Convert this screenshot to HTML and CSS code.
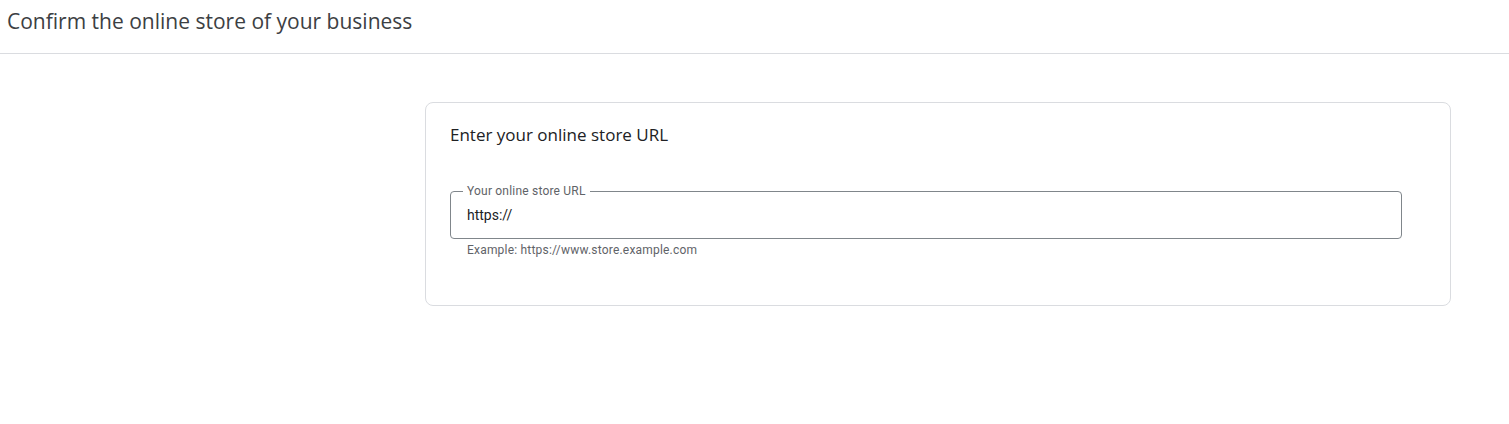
FILE: index.html
```html
<!DOCTYPE html>
<html lang="en">
<head>
<meta charset="utf-8">
<title>Confirm the online store of your business</title>
<link rel="stylesheet" href="styles.css">
</head>
<body>
<header class="page-header">
  <h1 class="page-title">Confirm the online store of your business</h1>
</header>
<main class="page-main">
  <section class="card">
    <h2 class="card-title">Enter your online store URL</h2>
    <div class="field">
      <label class="field-box">
        <span class="field-label">Your online store URL</span>
        <input class="field-input" type="text" value="https://">
      </label>
      <div class="field-hint">Example: https://www.store.example.com</div>
    </div>
  </section>
</main>
</body>
</html>
```
FILE: styles.css
```css
html, body {
  margin: 0;
  padding: 0;
  background: #ffffff;
}
body {
  font-family: Roboto, "Liberation Sans", Arial, sans-serif;
  color: #202124;
}
.page-header {
  height: 53px;
  border-bottom: 1px solid #dadce0;
  display: flex;
  align-items: flex-start;
  padding-left: 7px;
}
.page-title {
  margin: 0;
  padding-top: 6px;
  font-family: "Open Sans", "Noto Sans", sans-serif;
  font-weight: 400;
  font-size: 21px;
  line-height: 30px;
  color: #3c4043;
}
.page-main {
  padding: 48px 58px 0 425px;
}
.card {
  box-sizing: border-box;
  width: 1026px;
  height: 204px;
  border: 1px solid #dadce0;
  border-radius: 8px;
  padding: 20px 48px 0 24px;
}
.card-title {
  margin: 0;
  font-family: "Open Sans", "Noto Sans", sans-serif;
  font-weight: 400;
  font-size: 17px;
  line-height: 24px;
  color: #202124;
}
.field {
  margin-top: 44px;
}
.field-box {
  position: relative;
  box-sizing: border-box;
  display: flex;
  align-items: center;
  height: 48px;
  border: 1px solid #80868b;
  border-radius: 4px;
  padding: 0 15px 0 16px;
}
.field-label {
  position: absolute;
  top: -9px;
  left: 12px;
  padding: 0 4px;
  background: #ffffff;
  font-size: 12px;
  line-height: 16px;
  letter-spacing: 0.2px;
  color: #5f6368;
}
.field-input {
  display: block;
  width: 100%;
  border: 0;
  outline: none;
  padding: 0;
  margin: 0;
  font-family: Roboto, "Liberation Sans", Arial, sans-serif;
  font-size: 14px;
  line-height: 20px;
  height: 20px;
  color: #202124;
  background: transparent;
}
.field-hint {
  padding: 3px 0 0 17px;
  font-size: 12px;
  line-height: 16px;
  letter-spacing: 0.2px;
  color: #5f6368;
}
```
